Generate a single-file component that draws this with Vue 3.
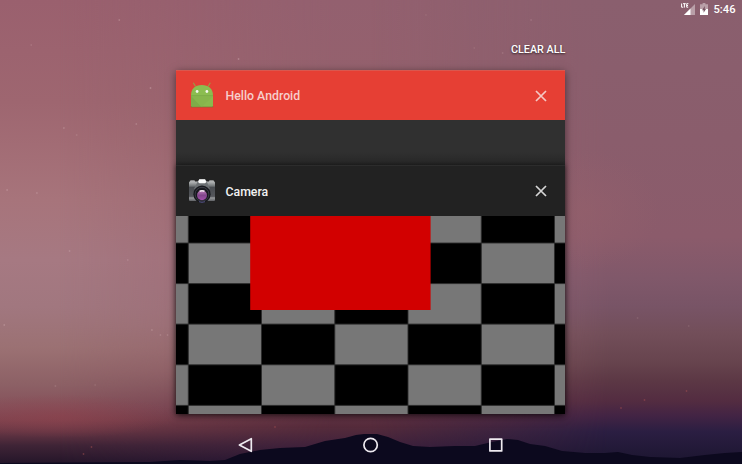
<script setup>
const stars = [
  [84, 20, 0.35], [22, 45, 0.2], [106, 88, 0.4], [96, 124, 0.3], [45, 128, 0.3], [54, 135, 0.2],
  [5, 190, 0.35], [26, 193, 0.3], [49, 251, 0.3], [90, 260, 0.25], [3, 325, 0.35], [107, 330, 0.3],
  [113, 335, 0.25], [118, 335, 0.25], [39, 386, 0.2], [67, 385, 0.15], [168, 59, 0.4],
  [300, 15, 0.12], [334, 48, 0.15], [354, 53, 0.2], [374, 20, 0.2], [449, 318, 0.15], [485, 326, 0.15],
]
const places = stars.map(([x, y, o]) => ({ x: x * 1.42, y, o }))
const embers = [[644.5, 400], [621, 408], [686.5, 391], [275, 427], [91.5, 447], [83.5, 454]]

const xs = [-61, 12.3, 85.5, 158.8, 232, 305.3, 378.5, 451.8]
const ys = [-13.5, 27, 67.6, 108.1, 148.8, 189.4, 230]
const cells = []
for (let r = 0; r < ys.length - 1; r++) {
  for (let c = 0; c < xs.length - 1; c++) {
    if ((r + c) % 2 === 0) {
      cells.push({ x: xs[c], y: ys[r], w: xs[c + 1] - xs[c], h: ys[r + 1] - ys[r] })
    }
  }
}
</script>

<template>
  <div class="screen">
    <svg class="wallpaper" viewBox="0 0 742 464" preserveAspectRatio="none" aria-hidden="true">
      <defs>
        <linearGradient id="skyLeft" x1="0" y1="0" x2="0" y2="1">
          <stop offset="0" stop-color="#9a606e" />
          <stop offset=".22" stop-color="#9e6670" />
          <stop offset=".43" stop-color="#a7747b" />
          <stop offset=".56" stop-color="#a67982" />
          <stop offset=".66" stop-color="#a1777f" />
          <stop offset=".75" stop-color="#9b7173" />
          <stop offset=".83" stop-color="#8c6065" />
          <stop offset=".88" stop-color="#85505a" />
          <stop offset=".905" stop-color="#7f444f" />
          <stop offset=".93" stop-color="#673644" />
          <stop offset=".96" stop-color="#3f2436" />
          <stop offset="1" stop-color="#231529" />
        </linearGradient>
        <linearGradient id="skyMid" x1="0" y1="0" x2="0" y2="1">
          <stop offset="0" stop-color="#93606f" />
          <stop offset=".3" stop-color="#96626c" />
          <stop offset=".55" stop-color="#9c6874" />
          <stop offset=".7" stop-color="#9a6a74" />
          <stop offset=".8" stop-color="#8d5a63" />
          <stop offset=".88" stop-color="#6b394a" />
          <stop offset=".92" stop-color="#552b3b" />
          <stop offset=".96" stop-color="#41223c" />
          <stop offset="1" stop-color="#2a1837" />
        </linearGradient>
        <linearGradient id="skyRight" x1="0" y1="0" x2="0" y2="1">
          <stop offset="0" stop-color="#8a5f6e" />
          <stop offset=".3" stop-color="#8a5d6c" />
          <stop offset=".51" stop-color="#8b5b6b" />
          <stop offset=".6" stop-color="#80586a" />
          <stop offset=".66" stop-color="#785466" />
          <stop offset=".72" stop-color="#724e59" />
          <stop offset=".78" stop-color="#67444e" />
          <stop offset=".82" stop-color="#5c3845" />
          <stop offset=".865" stop-color="#532c41" />
          <stop offset=".895" stop-color="#432444" />
          <stop offset=".93" stop-color="#2b1e42" />
          <stop offset="1" stop-color="#1b152f" />
        </linearGradient>
        <linearGradient id="fadeLeft" x1="0" x2="1">
          <stop offset=".08" stop-color="#000" />
          <stop offset=".45" stop-color="#fff" />
        </linearGradient>
        <linearGradient id="fadeRight" x1="0" x2="1">
          <stop offset=".5" stop-color="#000" />
          <stop offset=".82" stop-color="#fff" />
        </linearGradient>
        <mask id="maskMid"><rect width="742" height="464" fill="url(#fadeLeft)" /></mask>
        <mask id="maskRight"><rect width="742" height="464" fill="url(#fadeRight)" /></mask>
        <radialGradient id="glow">
          <stop offset="0" stop-color="#8e404b" stop-opacity=".5" />
          <stop offset="1" stop-color="#8e404b" stop-opacity="0" />
        </radialGradient>
        <radialGradient id="rose">
          <stop offset="0" stop-color="#94606b" stop-opacity=".6" />
          <stop offset="1" stop-color="#94606b" stop-opacity="0" />
        </radialGradient>
      </defs>
      <rect width="742" height="464" fill="url(#skyLeft)" />
      <rect width="742" height="464" fill="url(#skyMid)" mask="url(#maskMid)" />
      <rect width="742" height="464" fill="url(#skyRight)" mask="url(#maskRight)" />
      <ellipse cx="60" cy="416" rx="120" ry="22" fill="url(#glow)" />
      <ellipse cx="585" cy="210" rx="75" ry="60" fill="url(#rose)" />
      <circle v-for="(s, i) in places" :key="i" :cx="s.x" :cy="s.y" r=".9" fill="#d8b5b8" :opacity="s.o" />
      <circle v-for="(e, i) in embers" :key="'e' + i" :cx="e[0]" :cy="e[1]" r=".9" fill="#a64f52" opacity=".5" />
      <path fill="#0c091e" d="M0 463L150 462L180 460L210 461L225 460L240 454L260 450L280 448L305 447L325 441L345 438L356 435L364 434L377 434L388 437L400 442L413 446L430 447L455 446L475 446L492 442L507 439L518 440L530 444L545 446L562 451L585 453L605 453L618 452L632 455L650 457L680 458L705 455L725 453L742 452V464H0Z" />
    </svg>

    <header class="status">
      <svg class="signal" viewBox="0 0 15 14" aria-hidden="true">
        <path d="M14 3V14H3Z" fill="#fff" opacity=".4" />
        <path d="M9.5 7.5V14H3Z" fill="#fff" />
        <path d="M.6 2.5V6.2H2.2M2 2.7H4.8M3.4 2.7V6.6M7.4 2.7H5.7V6.2H7.2M5.7 4.5H7" stroke="#fff" stroke-width="1" fill="none" />
      </svg>
      <svg class="battery" viewBox="0 0 8 12" aria-hidden="true">
        <path d="M2.6 0H5.4V1.2H8V12H0V1.2H2.6Z" fill="#fff" opacity=".4" />
        <path d="M0 6H8V12H0Z" fill="#fff" />
        <path d="M4.8 3L2 7.2H3.6V9.8L6 6H4.8Z" fill="#765260" />
      </svg>
      <span class="clock">5:46</span>
    </header>

    <main class="recents">
      <button class="clear">CLEAR ALL</button>
      <section class="stack">
        <article class="card hello">
          <div class="bar">
            <svg class="icon" viewBox="0 0 28 28" aria-hidden="true">
              <path d="M7.4 5.3L5.3 1.7M20.2 5.3L22.3 1.7" stroke="#9a9a45" stroke-width="1.2" />
              <path d="M2.8 25.2H25.2V26.3H2.8Z" fill="#687638" />
              <path d="M3 14.3C3 8 7 4 13.8 4S25 8 25 14.3V24.5Q25 25.5 24 25.5H4Q3 25.5 3 24.5Z" fill="#8bbd50" />
              <path d="M3 15H25V15.6L14 25.5H4Q3 25.5 3 24.5Z" fill="#7fac48" />
              <path d="M3 14.8H25" stroke="#74a045" stroke-width=".7" />
              <path d="M3 15L13 25.5H24Q25 25.5 25 24.5V15Z" fill="#8aba4e" opacity=".75" />
              <circle cx="9.1" cy="10.5" r="1.4" fill="#f4f7ed" />
              <circle cx="18.9" cy="10.5" r="1.4" fill="#f4f7ed" />
            </svg>
            <h2 class="title">Hello Android</h2>
            <svg class="close" viewBox="0 0 12 12" aria-hidden="true"><path d="M1 1L11 11M11 1L1 11" /></svg>
          </div>
        </article>
        <article class="card camera">
          <div class="bar">
            <svg class="icon" viewBox="0 0 28 28" aria-hidden="true">
              <defs>
                <linearGradient id="metal" x1="0" y1="0" x2="0" y2="1">
                  <stop offset="0" stop-color="#b8babb" />
                  <stop offset=".22" stop-color="#737779" />
                  <stop offset=".3" stop-color="#484b50" />
                  <stop offset=".76" stop-color="#54565b" />
                  <stop offset=".84" stop-color="#97999c" />
                  <stop offset="1" stop-color="#606266" />
                </linearGradient>
                <linearGradient id="lens" x1="0" y1="0" x2="0" y2="1">
                  <stop offset="0" stop-color="#c183bd" />
                  <stop offset=".5" stop-color="#81458b" />
                  <stop offset="1" stop-color="#a350ac" />
                </linearGradient>
              </defs>
              <rect x="2" y="3.2" width="5" height="3" rx="1" fill="#a6a8a9" />
              <rect x="21" y="3.2" width="5" height="3" rx="1" fill="#a6a8a9" />
              <rect x="1" y="4.6" width="26" height="19.4" rx="1" fill="url(#metal)" />
              <path d="M6 12L10 4L11.3 2.2H17L18.5 4L22 12Z" fill="#6c7073" />
              <path d="M10 5L11.3 2.2H17L18.5 5L17 6.2H11.5Z" fill="#fafafa" />
              <circle cx="14" cy="17.2" r="8.6" fill="#17181d" />
              <circle cx="14" cy="17.2" r="6.9" fill="none" stroke="#484a54" stroke-width=".7" />
              <circle cx="14" cy="18.3" r="5" fill="url(#lens)" />
              <path d="M11.3 13.6Q14 12.4 16.8 13.6L16 15Q14 14.1 12 15Z" fill="#eee6ee" />
              <path d="M11 24.7Q14 26 17 24.7" stroke="#535184" fill="none" />
            </svg>
            <h2 class="title">Camera</h2>
            <svg class="close" viewBox="0 0 12 12" aria-hidden="true"><path d="M1 1L11 11M11 1L1 11" /></svg>
          </div>
          <svg class="preview" viewBox="0 0 389.4 198" aria-hidden="true">
            <rect width="389.4" height="198" fill="#000" />
            <rect v-for="(c, i) in cells" :key="i" :x="c.x" :y="c.y" :width="c.w" :height="c.h" fill="#777" />
            <g stroke="#2d2d2d" stroke-width=".9">
              <line v-for="x in xs" :key="'x' + x" :x1="x" :x2="x" y1="0" y2="198" />
              <line v-for="y in ys" :key="'y' + y" x1="0" x2="389.5" :y1="y" :y2="y" />
            </g>
            <rect x="74.2" y="0" width="180.4" height="94" fill="#d20000" />
          </svg>
        </article>
      </section>
    </main>

    <nav class="nav">
      <svg viewBox="0 0 16 16" aria-hidden="true"><path d="M13.3 1.7V14.3L1.4 8Z" /></svg>
      <svg viewBox="0 0 16 16" aria-hidden="true"><circle cx="7.6" cy="8" r="6.7" /></svg>
      <svg viewBox="0 0 16 16" aria-hidden="true"><rect x="1.9" y="2.1" width="11.8" height="11.8" /></svg>
    </nav>
  </div>
</template>

<style>
body {
  margin: 0;
  background: #201529;
}
</style>

<style scoped>
.screen {
  position: relative;
  display: flex;
  flex-direction: column;
  width: 742px;
  height: 464px;
  overflow: hidden;
  font-family: Roboto, "Noto Sans", sans-serif;
  color: #fff;
}
.wallpaper {
  position: absolute;
  inset: 0;
  width: 100%;
  height: 100%;
}
.status {
  position: relative;
  display: flex;
  justify-content: flex-end;
  align-items: center;
  height: 19px;
  padding-right: 6.5px;
}
.signal {
  width: 15px;
  height: 14px;
  margin: -3px 4.5px 0 0;
}
.battery {
  width: 8px;
  height: 12px;
  margin: -1px 5px 0 0;
}
.clock {
  font-size: 11.2px;
  line-height: 18px;
  font-weight: 500;
}
.recents {
  position: relative;
  display: flex;
  flex-direction: column;
  width: 389.4px;
  height: 395px;
  margin-left: 176px;
}
.clear {
  align-self: flex-end;
  height: 16px;
  margin: 22px 0 13px;
  padding: 0;
  border: 0;
  background: none;
  color: #fff;
  font: 500 10.8px/17px Roboto, sans-serif;
  text-shadow: 0 1px 2px rgba(0, 0, 0, .65);
}
.stack {
  display: flex;
  flex-direction: column;
  box-shadow: 0 2px 8px rgba(0, 0, 0, .5);
}
.card {
  position: relative;
}
.hello {
  height: 95px;
  background: linear-gradient(#303030 86%, #272727);
}
.camera {
  background: #222;
  box-shadow: 0 0 5px rgba(0, 0, 0, .55);
}
.bar {
  display: flex;
  align-items: center;
  box-sizing: border-box;
  height: 50.4px;
  padding: 0 18.4px 0 12px;
}
.hello .bar {
  background: #e63f34;
  border-top: 1px solid #d9584f;
}
.camera .bar {
  height: 51px;
  border-top: 1px solid #2c2c2c;
}
.icon {
  width: 28px;
  height: 28px;
}
.hello .icon {
  margin-top: -1px;
}
.title {
  flex: 1;
  margin: 1px 0 0 9.5px;
  font-size: 12.3px;
  line-height: 18px;
  font-weight: 500;
}
.hello .title {
  color: #f6cfcc;
}
.camera .title {
  color: #f2f2f2;
}
.close {
  width: 12px;
  height: 12px;
  fill: none;
  stroke: #d6d6d6;
  stroke-width: 1.7;
}
.hello .close {
  stroke: #f5c8c4;
}
.preview {
  display: block;
  width: 389.4px;
  height: 198px;
}
.nav {
  position: relative;
  display: flex;
  justify-content: center;
  gap: 109.3px;
  padding-top: 23px;
}
.nav svg {
  width: 16px;
  height: 16px;
  fill: none;
  stroke: #eeeaf0;
  stroke-width: 1.7;
  stroke-linejoin: round;
}
</style>
